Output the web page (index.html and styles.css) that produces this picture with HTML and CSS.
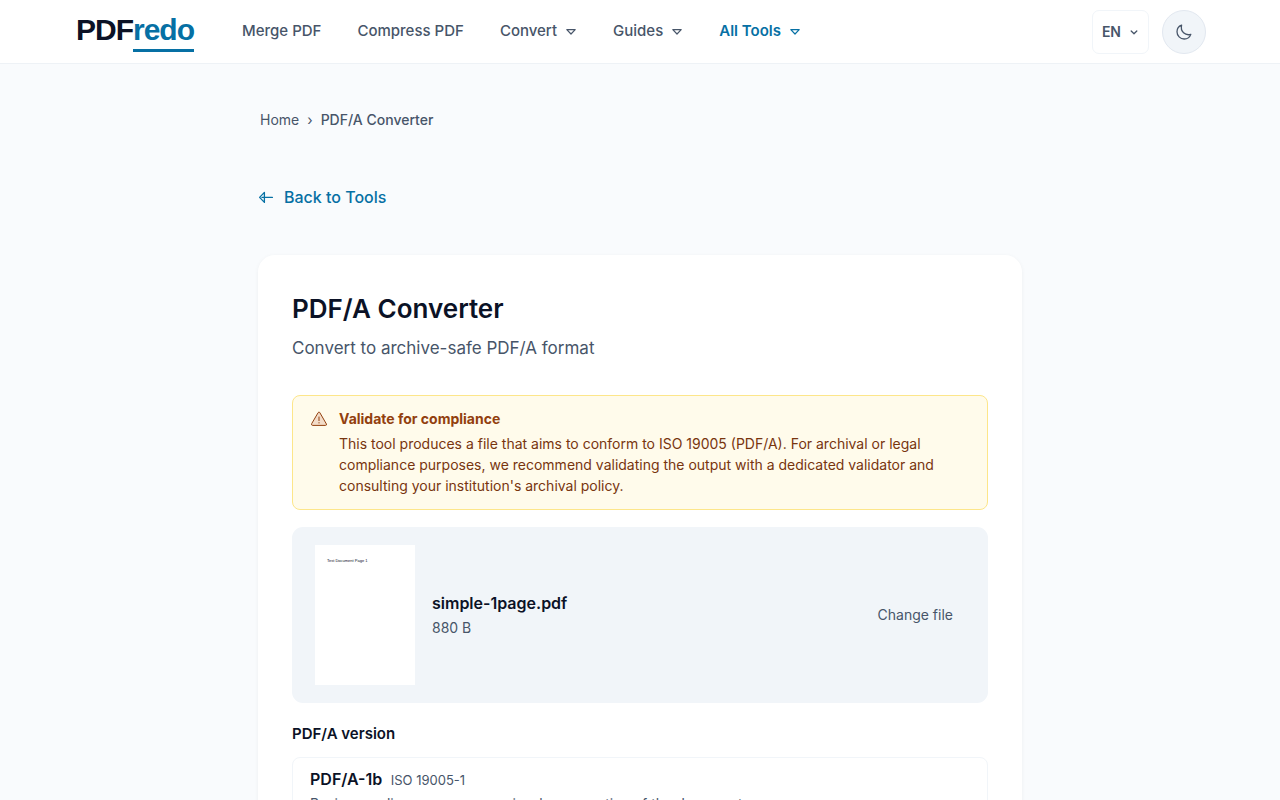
FILE: index.html
```
<!DOCTYPE html>
<html lang="en">

<head>
    <meta charset="UTF-8">
    <meta name="viewport" content="width=device-width, initial-scale=1.0">
    <title>PDF/A Converter - PDFredo</title>
    <link rel="stylesheet" href="styles.css">
</head>

<body>
    <header class="header">
        <div class="header-inner">
            <a href="#" class="logo">PDF<span class="logo-accent">redo</span></a>

            <nav class="nav">
                <a href="#" class="nav-link">Merge PDF</a>
                <a href="#" class="nav-link">Compress PDF</a>
                <button type="button" class="nav-link">Convert
                    <svg class="caret" viewBox="0 0 12 12"><path d="M1.8 4.6h8.4L6 9z" /></svg>
                </button>
                <button type="button" class="nav-link">Guides
                    <svg class="caret" viewBox="0 0 12 12"><path d="M1.8 4.6h8.4L6 9z" /></svg>
                </button>
                <button type="button" class="nav-link active">All Tools
                    <svg class="caret" viewBox="0 0 12 12"><path d="M1.8 4.6h8.4L6 9z" /></svg>
                </button>
            </nav>

            <div class="header-actions">
                <button type="button" class="lang-btn" aria-label="Language">EN
                    <svg class="lang-caret" viewBox="0 0 10 10"><path d="M2.2 4l2.8 2.8L7.8 4" /></svg>
                </button>
                <button type="button" class="theme-btn" aria-label="Dark mode">
                    <svg viewBox="0 0 18 18"><path d="M6.6 2.2C3.8 3.2 2 5.8 2 8.8C2 12.8 5.2 16 9.2 16C12.2 16 14.8 14.2 15.8 11.4C10.4 13 5 8.6 6.6 2.2z" /></svg>
                </button>
            </div>
        </div>
    </header>

    <main class="container">
        <nav class="breadcrumb" aria-label="Breadcrumb">
            <a href="#">Home</a>
            <span class="separator">›</span>
            <span class="current">PDF/A Converter</span>
        </nav>

        <a href="#" class="back-link">
            <svg viewBox="0 0 16 16"><path d="M6.4 3.4v10L1.6 8.4z" /><path d="M4 8.4h10.4" /></svg>
            Back to Tools
        </a>

        <section class="card">
            <h1>PDF/A Converter</h1>
            <p class="subtitle">Convert to archive-safe PDF/A format</p>

            <div class="notice">
                <svg class="notice-icon" viewBox="0 0 18 18">
                    <path class="notice-fill" d="M8.3 2.4Q9 1.4 9.7 2.4L16.4 14Q16.8 15.4 15.6 15.4H2.4Q1.2 15.4 1.6 14z" />
                    <path d="M9 7v3.6" />
                    <path d="M9 12.6v.4" />
                </svg>
                <div>
                    <h2>Validate for compliance</h2>
                    <p>This tool produces a file that aims to conform to ISO 19005 (PDF/A). For archival or legal
                        compliance purposes, we recommend validating the output with a dedicated validator and
                        consulting your institution's archival policy.</p>
                </div>
            </div>

            <div class="file">
                <div class="thumbnail">Test Document Page 1</div>
                <div class="file-info">
                    <p class="file-name">simple-1page.pdf</p>
                    <p class="file-size">880 B</p>
                </div>
                <button type="button" class="change-btn">Change file</button>
            </div>

            <fieldset class="versions">
                <legend>PDF/A version</legend>
                <label class="option">
                    <input type="radio" name="version" value="1b">
                    <span class="option-title">PDF/A-1b</span>
                    <span class="option-iso">ISO 19005-1</span>
                    <span class="option-text">Basic compliance — ensures visual preservation of the document.</span>
                </label>
            </fieldset>
        </section>
    </main>
</body>

</html>
```
FILE: styles.css
```
* {
    margin: 0;
    padding: 0;
    box-sizing: border-box;
}

body {
    background-color: #f9fbfd;
    color: #0b1226;
    font-family: Inter, "Liberation Sans", sans-serif;
    font-size: 16px;
    line-height: 24px;
}

a {
    color: inherit;
    text-decoration: none;
}

button {
    background: none;
    border: none;
    color: inherit;
    cursor: pointer;
    font: inherit;
}

svg {
    fill: none;
    stroke: currentColor;
    stroke-linecap: round;
    stroke-linejoin: round;
}

/* Header */
.header {
    background-color: #fff;
    border-bottom: 1px solid #eef2f6;
}

.header-inner {
    display: flex;
    align-items: center;
    max-width: 1162px;
    height: 63px;
    margin: 0 auto;
    padding: 0 15px 0 17px;
}

.logo {
    font-family: "Liberation Sans", Arial, sans-serif;
    font-size: 30px;
    font-weight: 700;
    letter-spacing: -1px;
    line-height: 38px;
}

.logo-accent {
    display: inline-block;
    border-bottom: 3px solid #0670a4;
    color: #0670a4;
}

.nav {
    display: flex;
    gap: 36px;
    margin-left: 48px;
    padding-bottom: 2px;
}

.nav-link {
    display: flex;
    align-items: center;
    gap: 8px;
    color: #475569;
    font-size: 15px;
    font-weight: 500;
}

.nav-link.active {
    color: #0670a4;
    font-weight: 600;
}

.caret {
    width: 12px;
    height: 12px;
    stroke-width: 1.2;
}

.header-actions {
    display: flex;
    gap: 13px;
    margin-left: auto;
}

.lang-btn {
    display: flex;
    align-items: center;
    gap: 8px;
    height: 44px;
    padding: 0 9px;
    border: 1px solid #f1f5f9;
    border-radius: 7px;
    color: #475569;
    font-size: 14px;
    font-weight: 600;
}

.lang-caret {
    width: 10px;
    height: 10px;
    stroke-width: 1.3;
}

.theme-btn {
    display: flex;
    align-items: center;
    justify-content: center;
    width: 44px;
    height: 44px;
    background-color: #f1f5f9;
    border: 1px solid #e2e8f0;
    border-radius: 50%;
    color: #475569;
}

.theme-btn svg {
    width: 18px;
    height: 18px;
    stroke-width: 1.3;
}

/* Page */
.container {
    max-width: 796px;
    margin: 0 auto;
    padding: 44px 16px;
}

.breadcrumb {
    display: flex;
    gap: 8px;
    padding: 0 2px;
    color: #475569;
    font-size: 14px;
}

.current {
    font-weight: 500;
}

.back-link {
    display: inline-flex;
    align-items: center;
    gap: 10px;
    margin: 53px 0 46px;
    color: #0670a4;
    font-weight: 500;
}

.back-link svg {
    width: 16px;
    height: 16px;
    stroke-width: 1.3;
}

.card {
    padding: 34px;
    background-color: #fff;
    border-radius: 17px;
    box-shadow: 0 1px 4px rgba(15, 23, 42, 0.05);
}

.card h1 {
    font-size: 26px;
    font-weight: 600;
    line-height: 40px;
}

.subtitle {
    margin: 5px 0 33px;
    color: #475569;
    font-size: 17px;
    line-height: 28px;
}

/* Compliance notice */
.notice {
    display: flex;
    gap: 11px;
    padding: 11px 17px 13px;
    background-color: #fffbeb;
    border: 1px solid #fde68a;
    border-radius: 8px;
    color: #78350f;
    font-size: 14px;
}

.notice-icon {
    flex-shrink: 0;
    width: 18px;
    height: 18px;
    margin-top: 3px;
    color: #92400e;
}

.notice-fill {
    fill: #f3dcc8;
}

.notice h2 {
    margin-bottom: 2px;
    color: #92400e;
    font-size: 14px;
    font-weight: 700;
    line-height: 24px;
}

.notice p {
    line-height: 21px;
}

/* Selected file */
.file {
    display: flex;
    align-items: center;
    gap: 17px;
    margin-top: 17px;
    padding: 18px 23px;
    background-color: #f1f5f9;
    border-radius: 11px;
}

.thumbnail {
    width: 100px;
    height: 140px;
    padding: 14px 12px;
    background-color: #fff;
    font-family: "Liberation Sans", Arial, sans-serif;
    font-size: 4px;
    line-height: 4px;
}

.file-name {
    font-weight: 600;
    line-height: 26px;
}

.file-size {
    color: #475569;
    font-size: 14px;
}

.change-btn {
    margin-left: auto;
    padding: 8px 12px;
    color: #475569;
    font-size: 14px;
}

/* PDF/A versions */
.versions {
    margin-top: 19px;
    border: none;
}

.versions legend {
    margin-bottom: 11px;
    font-size: 15px;
    font-weight: 600;
}

.option {
    display: block;
    padding: 9px 17px;
    border: 1px solid #f1f5f9;
    border-radius: 8px;
    cursor: pointer;
}

.option input {
    position: absolute;
    opacity: 0;
}

.option-title {
    margin-right: 4px;
    font-weight: 600;
}

.option-iso {
    color: #475569;
    font-size: 13px;
}

.option-text {
    display: block;
    color: #475569;
    font-size: 14px;
}
```
